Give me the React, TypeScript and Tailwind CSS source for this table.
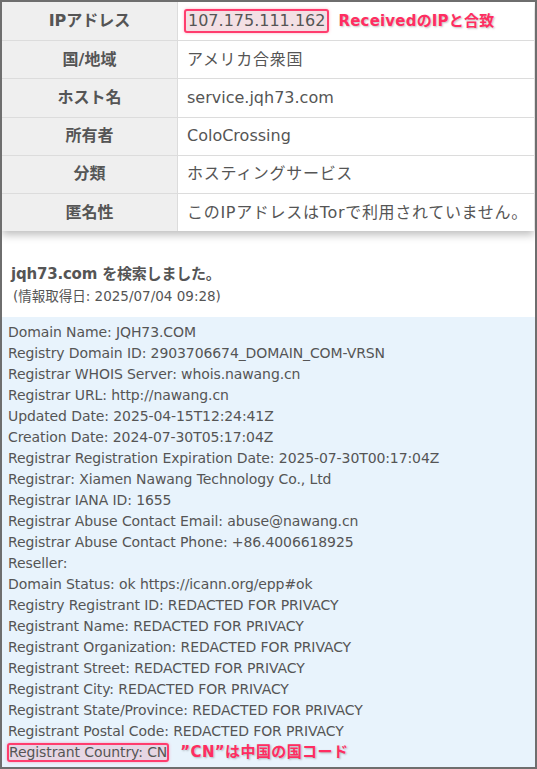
import React from "react";

const rows: { label: string; value: React.ReactNode; jp?: boolean }[] = [
	{ label: "IPアドレス", value: null },
	{ label: "国/地域", value: "アメリカ合衆国", jp: true },
	{ label: "ホスト名", value: "service.jqh73.com" },
	{ label: "所有者", value: "ColoCrossing" },
	{ label: "分類", value: "ホスティングサービス", jp: true },
	{ label: "匿名性", value: "このIPアドレスはTorで利用されていません。", jp: true },
];

const whois = [
	"Domain Name: JQH73.COM",
	"Registry Domain ID: 2903706674_DOMAIN_COM-VRSN",
	"Registrar WHOIS Server: whois.nawang.cn",
	"Registrar URL: http://nawang.cn",
	"Updated Date: 2025-04-15T12:24:41Z",
	"Creation Date: 2024-07-30T05:17:04Z",
	"Registrar Registration Expiration Date: 2025-07-30T00:17:04Z",
	"Registrar: Xiamen Nawang Technology Co., Ltd",
	"Registrar IANA ID: 1655",
	"Registrar Abuse Contact Email: abuse@nawang.cn",
	"Registrar Abuse Contact Phone: +86.4006618925",
	"Reseller:",
	"Domain Status: ok https://icann.org/epp#ok",
	"Registry Registrant ID: REDACTED FOR PRIVACY",
	"Registrant Name: REDACTED FOR PRIVACY",
	"Registrant Organization: REDACTED FOR PRIVACY",
	"Registrant Street: REDACTED FOR PRIVACY",
	"Registrant City: REDACTED FOR PRIVACY",
	"Registrant State/Province: REDACTED FOR PRIVACY",
	"Registrant Postal Code: REDACTED FOR PRIVACY",
];

const font = "font-['DejaVu_Sans','Noto_Sans_CJK_JP',sans-serif]";

export default function App() {
	return (
		<div className={`w-[537px] h-[769px] border-2 border-[#6e6e6e] bg-white overflow-hidden text-[#555] ${font}`}>
			<div className="shadow-[0_4px_8px_rgba(0,0,0,0.25)] mr-[1px]">
				{rows.map((r, i) => (
					<div key={i} className={`flex h-[38.2px] ${i > 0 ? "border-t border-[#dcdcdc]" : ""}`}>
						<div className="w-[176px] bg-[#efefef] border-r border-[#dcdcdc] flex items-center justify-center font-bold text-[16px] text-[#555]">
							{r.label}
						</div>
						<div className={`flex-1 flex items-center pl-[6px] text-[16px] ${r.jp ? "tracking-[0.7px]" : ""}`}>
							{i === 0 ? (
								<>
									<span className="border-2 border-[#ff3d6e] rounded-[3px] bg-[#f3dfe4] px-[2px] leading-[20px] text-[16px] shadow-[0_0_3px_rgba(255,61,110,0.4)]">107.175.111.162</span>
									<span className="ml-[9px] text-[15px] font-bold text-[#ff2d61] tracking-[0.2px] [text-shadow:1px_1px_2px_rgba(0,0,0,0.25)]">ReceivedのIPと合致</span>
								</>
							) : <span className="pl-[3px]">{r.value}</span>}
						</div>
					</div>
				))}
			</div>
			<div className="pt-[32px] pl-[9px] pb-[10px]">
				<div className="font-bold text-[15px] leading-[22px] tracking-[-0.2px]">jqh73.com を検索しました。</div>
				<div className="text-[13.5px] leading-[22px] pl-[2px]">(情報取得日: 2025/07/04 09:28)</div>
			</div>
			<div className="bg-[#e8f3fc] pl-[5px] pt-[5px] text-[14px] leading-[21px] tracking-[-0.1px] h-full">
				{whois.map((l, i) => (
					<div key={i} className="pl-[1px]">{l}</div>
				))}
				<div className="flex items-center">
					<span className="border-2 border-[#ff3d6e] rounded-[3px] bg-[#e6d6e4] leading-[15px] shadow-[0_0_3px_rgba(255,61,110,0.4)]">Registrant Country: CN</span>
					<span className="ml-[11px] text-[15px] font-bold text-[#ff2d61] tracking-[0.4px] [text-shadow:1px_1px_2px_rgba(0,0,0,0.25)]">”CN”は中国の国コード</span>
				</div>
			</div>
		</div>
	);
}
